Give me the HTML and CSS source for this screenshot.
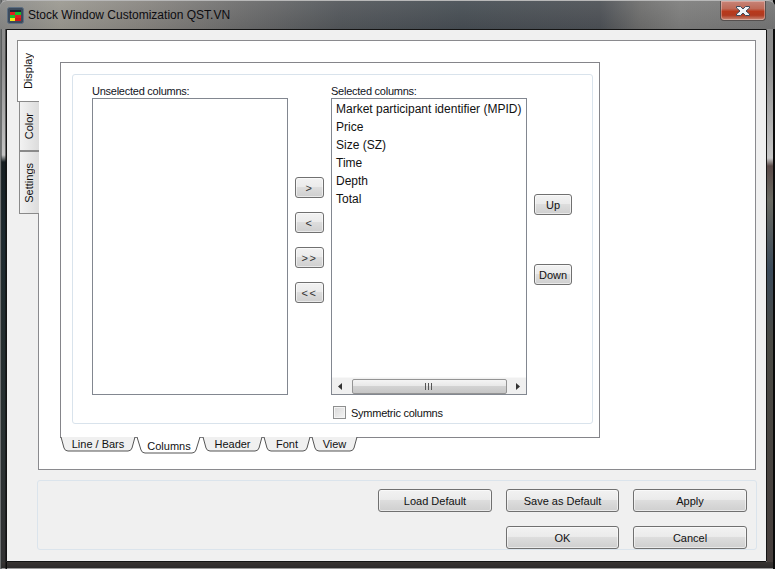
FILE: index.html
```html
<!DOCTYPE html>
<html lang="en">
<head>
<meta charset="utf-8">
<title>Stock Window Customization QST.VN</title>
<link rel="stylesheet" href="styles.css">
</head>
<body>
<div class="window">
  <header class="titlebar">
    <svg class="app-icon" width="17" height="17" viewBox="0 0 17 17">
      <rect x="0.5" y="0.5" width="16" height="16" rx="2" fill="#3c4a5c" stroke="#5d6f82"/>
      <rect x="3" y="3" width="11" height="2" fill="#1c2630"/>
      <rect x="3" y="5" width="5" height="3" fill="#e02020"/>
      <rect x="8" y="5" width="6" height="3" fill="#18c02a"/>
      <rect x="3" y="8" width="5" height="3" fill="#18c02a"/>
      <rect x="8" y="8" width="6" height="3" fill="#e02020"/>
      <rect x="3" y="11" width="5" height="3" fill="#f2e61e"/>
      <rect x="8" y="11" width="6" height="3" fill="#d01818"/>
    </svg>
    <span class="title">Stock Window Customization QST.VN</span>
    <div class="close">
      <svg width="18" height="12" viewBox="0 0 18 12">
        <path d="M2.5 1.5h4l2.5 2.5 2.5-2.500h4v1.500l-3.500 3 3.500 3v1.500h-4l-2.500-2.500-2.500 2.500h-4v-1.500l3.500-3-3.500-3z" fill="#f2f5f8" stroke="#3d4a5c"/>
      </svg>
    </div>
  </header>

  <main class="client">
    <section class="top">
      <nav class="side-tabs">
        <div class="side-tab active"><span>Display</span></div>
        <div class="side-tab color"><span>Color</span></div>
        <div class="side-tab settings"><span>Settings</span></div>
      </nav>
      <div class="pane">
        <div class="frame">
          <div class="group">
            <div class="col">
              <label class="cap">Unselected columns:</label>
              <div class="list"></div>
            </div>
            <div class="move-btns">
              <button class="btn small">&gt;</button>
              <button class="btn small">&lt;</button>
              <button class="btn small">&gt;&gt;</button>
              <button class="btn small">&lt;&lt;</button>
            </div>
            <div class="col">
              <label class="cap">Selected columns:</label>
              <div class="list">
                <ul class="items">
                  <li>Market participant identifier (MPID)</li>
                  <li>Price</li>
                  <li>Size (SZ)</li>
                  <li>Time</li>
                  <li>Depth</li>
                  <li>Total</li>
                </ul>
                <div class="hscroll">
                  <svg class="arrow" width="5" height="7" viewBox="0 0 5 7"><path d="M4 0v7L0 3.500z" fill="#333"/></svg>
                  <div class="thumb">
                    <svg width="8" height="7" viewBox="0 0 8 7"><path d="M.5 0v7M3.500 0v7M6.500 0v7" stroke="#555"/></svg>
                  </div>
                  <svg class="arrow" width="5" height="7" viewBox="0 0 5 7"><path d="M1 0v7l4-3.500z" fill="#333"/></svg>
                </div>
              </div>
              <div class="check-row">
                <span class="checkbox"></span>
                <span>Symmetric columns</span>
              </div>
            </div>
            <div class="order-btns">
              <button class="btn order">Up</button>
              <button class="btn order">Down</button>
            </div>
          </div>
        </div>
        <div class="bottom-tabs">
          <div class="btab w-line"><svg class="shape" viewBox="0 0 76 15" preserveAspectRatio="none"><path d="M1 0l3 11q1 3 4 3h60q3 0 4-3l3-11" fill="#f0f0f0" stroke="#555"/></svg><span>Line / Bars</span></div>
          <div class="btab w-cols active"><svg class="shape" viewBox="0 0 66 17" preserveAspectRatio="none"><path d="M1 0l4 13q1 3 4 3h47q3 0 4-3l4-13" fill="#fff" stroke="#555"/></svg><span>Columns</span></div>
          <div class="btab w-head"><svg class="shape" viewBox="0 0 61 15" preserveAspectRatio="none"><path d="M1 0l3 11q1 3 4 3h45q3 0 4-3l3-11" fill="#f0f0f0" stroke="#555"/></svg><span>Header</span></div>
          <div class="btab w-font"><svg class="shape" viewBox="0 0 48 15" preserveAspectRatio="none"><path d="M1 0l3 11q1 3 4 3h32q3 0 4-3l3-11" fill="#f0f0f0" stroke="#555"/></svg><span>Font</span></div>
          <div class="btab w-view"><svg class="shape" viewBox="0 0 47 15" preserveAspectRatio="none"><path d="M1 0l3 11q1 3 4 3h31q3 0 4-3l3-11" fill="#f0f0f0" stroke="#555"/></svg><span>View</span></div>
        </div>
      </div>
    </section>
    <footer class="actions">
      <button class="btn action">Load Default</button>
      <button class="btn action">Save as Default</button>
      <button class="btn action">Apply</button>
      <button class="btn action slot2">OK</button>
      <button class="btn action">Cancel</button>
    </footer>
  </main>
</div>
</body>
</html>
```
FILE: styles.css
```css
* { box-sizing: border-box; }
html, body { margin: 0; padding: 0; background: #111; }
body { font-family: "Liberation Sans", sans-serif; font-size: 12px; color: #111; }

.window {
  width: 775px;
  height: 569px;
  display: flex;
  flex-direction: column;
  padding: 0 8px 7px 6px;
  background:
    linear-gradient(90deg, #b5b5b5 0, #2a2f30 1px, transparent 2px),
    linear-gradient(90deg, transparent 5px, #0a0a0a 6px) left top / 7px 100% no-repeat,
    linear-gradient(270deg, #0b0b0b 0, #0b0b0b 2px, transparent 2px) right top / 8px 100% no-repeat,
    linear-gradient(0deg, #9a9a9a 0, #9a9a9a 1px, #2c2a2a 1px, #383432 7px, transparent 7px) left bottom / 100% 8px no-repeat,
    linear-gradient(180deg, transparent 0, transparent 155px, #171f22 162px, #1d2a30 240px, #232d2f 330px, #2a3233 440px, #333 560px) left top / 6px 100% no-repeat,
    linear-gradient(180deg, transparent 0, transparent 158px, #5a4a48 166px, #6a6a62 200px, #3a4a5a 270px, #4a4a44 340px, #463e3c 560px) right top / 8px 100% no-repeat,
    linear-gradient(180deg, #8b8b8b 0, #8c8c8c 60px, #c4c4c4 155px, #c8c8c8 160px);
}

.titlebar {
  height: 29px;
  flex: none;
  display: flex;
  align-items: flex-start;
  margin: 0 -8px 0 -6px;
  padding: 7px 0 0 7px;
  border-top: 1px solid #b8b8b8;
  border-radius: 7px 7px 0 0;
  background:
    linear-gradient(180deg, rgba(255,255,255,.06), rgba(0,0,0,.06)),
    linear-gradient(90deg, #8a8a88 0, #9c9a92 60px, #8a8782 140px, #6e6e6e 240px, #54585c 340px, #484f55 460px, #4e5257 600px, #6f6f6e 640px, #7f7f7e 680px, #777 775px);
}
.app-icon { flex: none; margin-top: -1px; }
.title { margin-left: 4px; margin-top: -1px; font-size: 12px; line-height: 16px; color: #0c0c10; white-space: nowrap; }
.close {
  margin: -7px 9px 0 auto;
  width: 46px;
  height: 20px;
  flex: none;
  display: flex;
  align-items: center;
  justify-content: center;
  border: 1px solid #55504f;
  border-top: 0;
  border-radius: 0 0 4px 4px;
  box-shadow: inset 0 0 0 1px rgba(255,255,255,.3);
  background: linear-gradient(180deg, #c78478 0, #be6a58 40%, #b8391c 55%, #b03a20 75%, #c98a78 100%);
}

.client {
  flex: 1;
  display: flex;
  flex-direction: column;
  padding: 10px 10px 0 10px;
  background: #f0f0f0;
  border: 1px solid #141414;
  border-radius: 1px;
}

.top { display: flex; flex: none; }

.side-tabs { width: 21px; flex: none; display: flex; flex-direction: column; position: relative; z-index: 1; }
.side-tab {
  display: flex;
  align-items: center;
  justify-content: center;
  margin-left: 2px;
  width: 20px;
  padding-right: 2px;
  border: 1px solid #8a8a8a;
  border-right: 0;
  background: linear-gradient(90deg, #f2f2f2, #dcdcdc);
}
.side-tab span { writing-mode: vertical-rl; transform: rotate(180deg); font-size: 11px; white-space: nowrap; }
.side-tab.active { margin-left: 0; width: 22px; height: 62px; padding-right: 1px; background: #fff; border-bottom-color: #8a8a8a; }
.side-tab.color { height: 50px; margin-top: -1px; border-top: 1px solid #8a8a8a; }
.side-tab.settings { height: 63px; margin-top: 0; }

.pane {
  width: 718px;
  height: 430px;
  padding: 21px 0 0 21px;
  background: #fff;
  border: 1px solid #8a8a8e;
}

.frame {
  width: 540px;
  height: 376px;
  padding: 11px 5px 0 11px;
  background: #fff;
  border: 1px solid #85858a;
}

.group {
  width: 521px;
  height: 350px;
  display: flex;
  padding: 10px 0 0 19px;
  border: 1px solid #d9e3ec;
  border-radius: 3px;
}

.col { width: 196px; flex: none; display: flex; flex-direction: column; }
.cap { height: 13px; line-height: 12px; font-size: 11px; letter-spacing: -.25px; white-space: nowrap; color: #10131c; }
.list {
  height: 297px;
  flex: none;
  display: flex;
  flex-direction: column;
  background: #fff;
  border: 1px solid #828790;
}
.items { flex: 1; margin: 0; padding: 1px 0 0 4px; list-style: none; font-size: 12px; }
.items li { height: 18px; line-height: 18px; white-space: nowrap; }

.hscroll {
  height: 17px;
  flex: none;
  display: flex;
  align-items: center;
  background: #f0f0f0;
  border-top: 1px solid #f8f8f8;
  padding: 0 6px 0 6px;
  justify-content: space-between;
}
.arrow { flex: none; }
.thumb {
  width: 155px;
  height: 15px;
  display: flex;
  align-items: center;
  justify-content: center;
  border: 1px solid #949494;
  border-radius: 2px;
  background: linear-gradient(180deg, #f4f4f4 0, #e8e8e8 45%, #d2d2d2 50%, #c6c6c6 100%);
}

.check-row { display: flex; align-items: center; gap: 5px; margin: 11px 0 0 2px; height: 13px; font-size: 11px; letter-spacing: -.25px; white-space: nowrap; }
.checkbox {
  width: 13px;
  height: 13px;
  flex: none;
  border: 1px solid #8e8f8f;
  background: linear-gradient(135deg, #d8d8d8, #f4f4f4);
  box-shadow: inset 0 0 0 1px #f4f4f4;
}

.btn {
  display: block;
  padding: 0;
  font: inherit;
  color: #111;
  text-align: center;
  border: 1px solid #707070;
  border-radius: 3px;
  background: linear-gradient(180deg, #f2f2f2 0, #ebebeb 45%, #dddddd 50%, #cfcfcf 100%);
  box-shadow: inset 0 0 0 1px rgba(255,255,255,.55);
}
.small { width: 29px; height: 21px; font-size: 11px; letter-spacing: 1.500px; color: #333; }
.order { width: 38px; height: 21px; font-size: 11px; }

.move-btns { width: 29px; flex: none; margin: 92px 7px 0 7px; display: flex; flex-direction: column; gap: 14px; }
.order-btns { width: 38px; flex: none; margin: 109px 0 0 7px; display: flex; flex-direction: column; gap: 49px; }

.bottom-tabs { display: flex; margin-top: -1px; }
.btab {
  position: relative;
  height: 15px;
  display: flex;
  align-items: center;
  justify-content: center;
  font-size: 11px;
}
.btab span { position: relative; line-height: 13px; margin-top: -1px; }
.btab .shape { position: absolute; left: 0; top: 0; width: 100%; height: 100%; }
.btab.active { height: 17px; }
.btab.active span { margin-top: 1px; }
.w-line { width: 76px; }
.w-cols { width: 66px; }
.w-head { width: 61px; }
.w-font { width: 48px; }
.w-view { width: 47px; }

.actions {
  width: 720px;
  height: 70px;
  margin: 10px 0 0 20px;
  padding: 8px 9px 0 0;
  display: grid;
  grid-template-columns: 114px 113px 114px;
  grid-template-rows: 23px 23px;
  column-gap: 14px;
  row-gap: 14px;
  justify-content: end;
  border: 1px solid #dbe4ec;
  border-radius: 3px;
}
.action { font-size: 11px; }
.slot2 { grid-column: 2; }
```
